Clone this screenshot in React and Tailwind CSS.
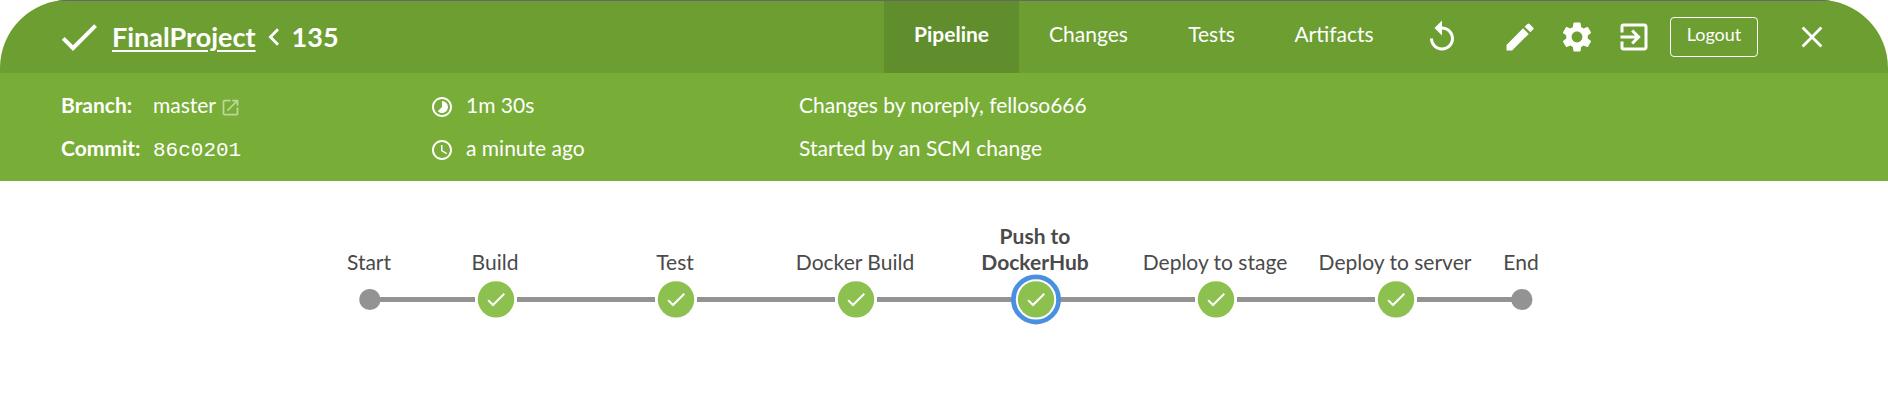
import React from 'react';
import { MdReplay, MdEdit, MdSettings, MdExitToApp, MdOpenInNew, MdTimelapse, MdAccessTime } from 'react-icons/md';

const stages = ['Build', 'Test', 'Docker Build', 'Push to DockerHub', 'Deploy to stage', 'Deploy to server'];

function Check({ className }) {
  return (
    <svg viewBox="0 0 24 24" className={className} fill="currentColor">
      <path d="M9 16.17L4.83 12l-1.42 1.41L9 19 21 7l-1.41-1.41z" />
    </svg>
  );
}

function Header() {
  return (
    <header className="flex h-[73px] items-stretch border-t border-[#68666b] bg-[#6c9e31] pl-[55px] pr-[58px]">
      <div className="flex items-center">
        <Check className="size-12" />
        <a className="ml-[9px] text-[27px] leading-9 font-bold underline decoration-2 underline-offset-[3px]">FinalProject</a>
        <svg viewBox="0 0 12 18" className="ml-3 h-[18px] w-3" fill="none" stroke="currentColor" strokeWidth="2.8">
          <path d="M10 1.2 2.4 9 10 16.8" />
        </svg>
        <span className="ml-3 text-[27px] leading-9 font-bold">135</span>
      </div>
      <nav className="ml-auto flex text-[21px] leading-[66px]">
        <a className="w-[135px] bg-[#618e2c] text-center font-bold">Pipeline</a>
        <a className="w-[139px] text-center">Changes</a>
        <a className="w-[107px] text-center">Tests</a>
        <a className="w-[139px] pr-px text-center">Artifacts</a>
      </nav>
      <div className="flex items-center">
        <MdReplay className="ml-5 size-9" />
        <MdEdit className="ml-[42px] size-9" />
        <MdSettings className="ml-[21px] size-9" />
        <MdExitToApp className="ml-[21px] size-9" />
        <button className="ml-[18px] h-10 w-22 rounded border border-white pb-[5px] text-[18px] leading-[33px]">Logout</button>
        <svg viewBox="0 0 36 36" className="ml-9 size-9" fill="none" stroke="currentColor" strokeWidth="2.8">
          <path d="M8.6 8.6 27.4 27.4M27.4 8.6 8.6 27.4" />
        </svg>
      </div>
    </header>
  );
}

function RunInfo() {
  return (
    <section className="grid h-[108px] grid-cols-[369px_368px_1fr] bg-[#78ae37] pt-2.5 pl-[61px] text-[21px] leading-[43px]">
      <div>
        <div className="flex h-[43px] items-center">
          <b className="w-[92px]">Branch:</b>
          <span>master</span>
          <MdOpenInNew className="mt-1.5 ml-1 size-[21px] opacity-50" />
        </div>
        <div className="flex h-[43px] items-center">
          <b className="w-[92px]">Commit:</b>
          <span className="pt-[6px] font-['Liberation_Mono',monospace] text-[21px] leading-10">86c0201</span>
        </div>
      </div>
      <div>
        <div className="flex h-[43px] items-center gap-3">
          <MdTimelapse className="mt-1 size-6" />
          <span>1m 30s</span>
        </div>
        <div className="flex h-[43px] items-center gap-3">
          <MdAccessTime className="mt-1 size-6" />
          <span>a minute ago</span>
        </div>
      </div>
      <div className="pl-px">
        <p>Changes by noreply, felloso666</p>
        <p>Started by an SCM change</p>
      </div>
    </section>
  );
}

function Line() {
  return <span className="h-[5px] flex-1 bg-[#949393]" />;
}

function Marker({ selected }) {
  return (
    <svg viewBox="0 0 42 49" className="relative h-[49px] w-[42px] overflow-visible">
      {selected && <circle cx="21" cy="24.4" r="22.6" fill="#fff" stroke="#4a90e2" strokeWidth="4.8" />}
      <circle cx="21" cy="24.4" r="18.2" fill="#8cc04f" />
      <path transform="translate(9 12.4)" fill="#fff" d="M9 16.17L4.83 12l-1.42 1.41L9 19 21 7l-1.41-1.41z" />
    </svg>
  );
}

function Stage({ name }) {
  const selected = name === 'Push to DockerHub';
  return (
    <div className="flex w-[180px] flex-col items-center">
      <div className={selected ? 'flex h-[58px] w-[120px] items-end pr-[2px] text-center font-bold' : 'flex h-[58px] items-end pr-[2px] whitespace-nowrap'}>
        <span className="w-full">{name}</span>
      </div>
      <div className="flex h-[49px] w-full items-center">
        <Line />
        <Marker selected={selected} />
        <Line />
      </div>
    </div>
  );
}

function Terminal({ name, end }) {
  return (
    <div className="flex w-[72px] flex-col items-center">
      <div className="flex h-[58px] items-end pr-[2px]">{name}</div>
      <div className="flex h-[49px] w-full items-center">
        {end ? <Line /> : <span className="flex-1" />}
        <svg viewBox="0 0 20 21" className="h-[21px] w-5 overflow-visible">
          <circle cx="9.9" cy="10.5" r="10.6" fill="#949393" />
        </svg>
        {end ? <span className="flex-1" /> : <Line />}
      </div>
    </div>
  );
}

export default function App() {
  return (
    <div className="h-[415px] w-[1888px] overflow-hidden bg-white font-['Lato',sans-serif]">
      <div className="overflow-hidden rounded-t-[68px] text-white">
        <Header />
        <RunInfo />
      </div>
      <main className="flex pt-9 pl-[334px] text-[21px] leading-[26px] text-[#4a4a4a]">
        <Terminal name="Start" />
        {stages.map((name) => <Stage key={name} name={name} />)}
        <Terminal name="End" end />
      </main>
    </div>
  );
}
